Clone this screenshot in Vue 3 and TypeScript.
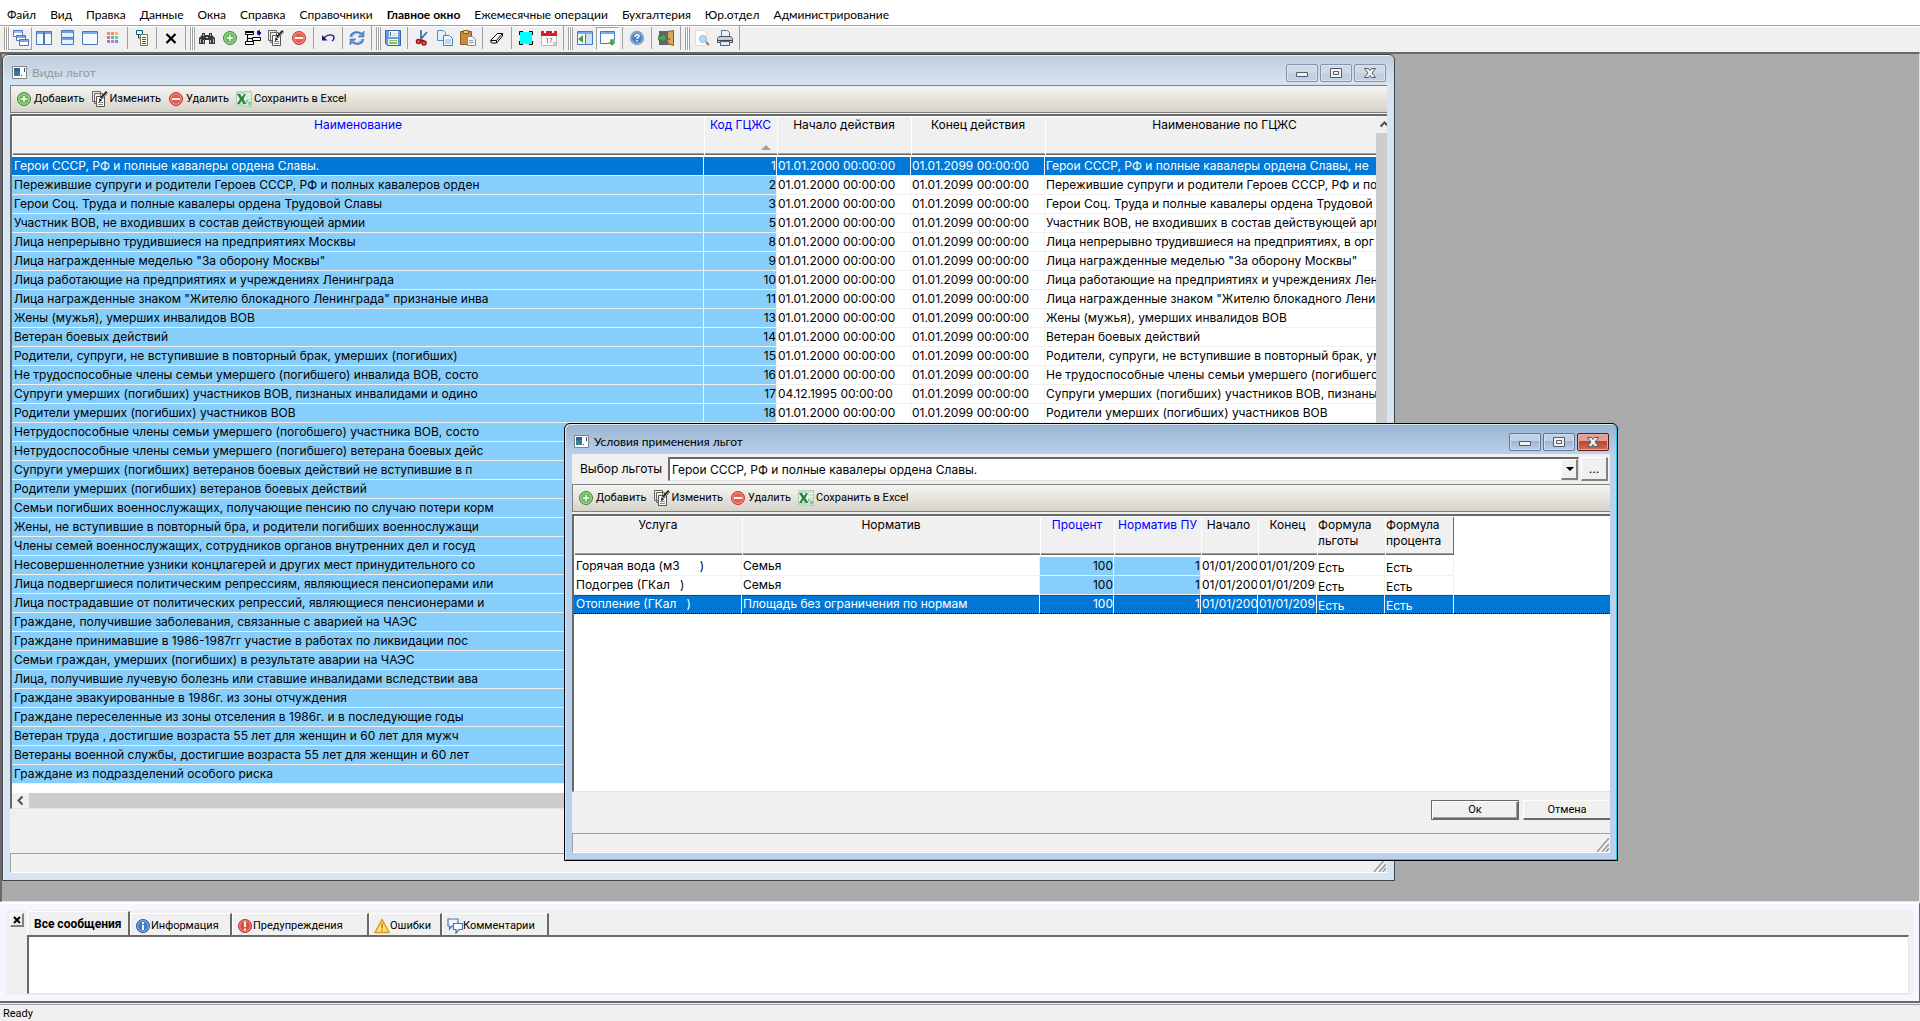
<script setup lang="ts">
import { ref } from 'vue'

const menu = ['Файл', 'Вид', 'Правка', 'Данные', 'Окна', 'Справка', 'Справочники', 'Главное окно',
  'Ежемесячные операции', 'Бухгалтерия', 'Юр.отдел', 'Администрирование']

const icons: Record<string, string> = {
  cascade: '<g stroke="#4a78b8" fill="#fff"><path d="M.5 .5h9v6h-9z"/><path fill="#9cc0ee" stroke="none" d="M1 1h8v2H1z"/><path d="M3.500 5.500h9v5h-9z"/><path fill="#7ba7e0" stroke="none" d="M4 6h8v2H4z"/><path d="M6.500 9.500h9v6h-9z"/><path fill="#7ba7e0" stroke="none" d="M7 10h8v2H7z"/></g>',
  columns: '<path fill="#f4f8ff" stroke="#4a78b8" d="M.5 1.500h15v13H.5z"/><path fill="#6fa0e0" d="M1 2h14v2H1z"/><path stroke="#4a78b8" d="M7.500 2v12M8.500 2v12"/>',
  rows: '<path fill="#e4eefc" stroke="#4a78b8" d="M2.500 .5h12v14h-12z"/><path fill="#6fa0e0" d="M3 1h11v2H3zM3 8h11v2H3z"/><path stroke="#4a78b8" d="M3 7.500h11"/>',
  single: '<path fill="#f4f8ff" stroke="#4a78b8" d="M.5 1.500h15v13H.5z"/><path fill="#7bace8" d="M1 2h14v2H1z"/>',
  palette: '<path fill="#f28b6c" d="M2 2h3v3H2zM6 2h3v3H6z"/><path fill="#f4b860" d="M10 2h3v3h-3z"/><path fill="#f06a7a" d="M2 6h3v3H2z"/><path fill="#5ecb68" d="M6 6h3v3H6z"/><path fill="#66c8d8" d="M10 6h3v3h-3z"/><path fill="#8a8ad8" d="M2 10h3v3H2z"/><path fill="#c07ad0" d="M6 10h3v3H6z"/><path fill="#6c94e0" d="M10 10h3v3h-3z"/>',
  tree: '<path fill="#dff" stroke="#067" d="M2.500 .5h6v4h-6z"/><path fill="none" stroke="#333" d="M4.500 5v3H7"/><path fill="#fffbe8" stroke="#776" d="M6.500 4.500h7v11h-7z"/><path stroke="#555" d="M8 7.500h4M8 9.500h4M8 11.500h4M8 13.500h4"/>',
  close: '<path stroke="#000" stroke-width="2.200" d="M3.500 4l9 9M12.500 4l-9 9"/>',
  find: '<path fill="#333b40" d="M3 3h3v2h4V3h3v2l3 3v6h-6v-4H6v4H0V8l3-3z"/><path fill="#a9b8c0" d="M1 9h1v4H1zM4 10h1v3H4zM11 10h1v3h-1zM14 9h1v4h-1zM4 4h1v2H4zM11 4h1v2h-1z"/><path fill="#ddd" d="M7 7h2v1H7z"/>',
  add: '<circle cx="8" cy="8" r="6.500" fill="#6cbf5a" stroke="#3f8a36"/><circle cx="8" cy="8" r="5.300" fill="none" stroke="#b4e0a4" stroke-width=".8"/><path fill="#fff" stroke="#3f8a36" stroke-width=".4" d="M7 4.500h2V7h2.500v2H9v2.500H7V9H4.500V7H7z"/>',
  insert: '<path fill="#fff" stroke="#000" d="M.5 2.500h8v2h-8zM.5 11.500h8v3h-8zM7.500 7.500h8v3h-8z"/><path stroke="#000" d="M0 1.500h9M2.500 4v8M2 8.500h6"/><path fill="#11a" d="M12 1l3-1v2h1v2h-1v2l-3-2z"/>',
  edit: '<path fill="#eee" stroke="#666" d="M.5 .5h8v10h-8zM2.500 2.500h8v10h-8z"/><path fill="#fff" stroke="#555" d="M4.500 5.500h8v10h-8z"/><path stroke="#888" d="M6 11.500h5M6 13.500h5"/><path stroke="#222" stroke-width="2.600" d="M15 1L9 7.500"/><path stroke="#c9c28a" d="M15.500 1.500L10 7.500"/><path fill="#111" d="M7.500 7l2.500 2.500L7 11z"/>',
  remove: '<circle cx="8" cy="8" r="6.500" fill="#e85c4c" stroke="#c23a30"/><circle cx="8" cy="8" r="5.300" fill="none" stroke="#f7a79c" stroke-width=".8"/><path fill="#fff" d="M4 7h8v2H4z"/>',
  undo: '<path fill="none" stroke="#1a1a7c" stroke-width="1.300" d="M4 8c3-4 9-4 10-1 .5 2-.5 3-2 4"/><path fill="#1a1a7c" d="M2 5v5.500h5.500z"/>',
  refresh: '<path fill="none" stroke="#3f74b4" stroke-width="2.600" d="M2 7c1-5 8-6 11-2M14 9c-1 5-8 6-11 2"/><path fill="#5c93d0" stroke="#3f74b4" stroke-width=".6" d="M15 1v6H9zM1 15V9h6z"/><path fill="none" stroke="#b9d5f2" d="M2.500 6.500c2-4 7-4 9.500-1.500M13.500 9.500c-2 4-7 4-9.500 1.500"/>',
  save: '<path fill="#6a9bdc" stroke="#3a64a4" d="M.5 .5h15v15H2.500l-2-2z"/><path fill="#f6f9ff" d="M4 1h9v6H4z"/><path fill="#3a64a4" d="M5 2h1v4H5z"/><path fill="#bcd3f2" d="M7 3h5v1H7zM7 5h5v1H7z"/><path fill="#eef4e4" d="M3 9h10v6H3z"/><path fill="#8ac060" d="M4 10h8v1H4zM4 12h8v2H4z"/>',
  cut: '<path stroke="#3d6ea5" stroke-width="1.700" d="M7 0v9M13 2L7 9"/><g fill="#e66" stroke="#a11414" stroke-width="1.600"><circle cx="4.500" cy="11.500" r="2"/><circle cx="10" cy="13" r="2"/></g><path stroke="#a11414" stroke-width="2" d="M6 10l4 1"/>',
  copy: '<path fill="#e3eefc" stroke="#5b8ccc" d="M.5 .5h6l2 2v8h-8z"/><path fill="#f4f9ff" stroke="#4a7cc0" d="M6.500 5.500h6l3 3v7h-9z"/><path fill="#bcd6f5" d="M8 9h6v5H8z"/>',
  paste: '<path fill="#c98a3c" stroke="#8a5a20" d="M.5 1.500h11v13H.5z"/><path fill="#e6c878" stroke="#8a5a20" d="M3.500 .5h5v3h-5z"/><path fill="#f6f6f6" stroke="#888" d="M7.500 6.500h5l3 3v6h-8z"/><path stroke="#999" d="M9 10.500h4M9 12.500h5"/>',
  erase: '<path fill="#fff" stroke="#000" d="M1.500 10.500l7-7h5v2.500l-6 7h-5zM2 10.500h5.500l6-7M7.500 10.500V13"/>',
  cyan: '<path fill="#0ff" d="M2 2h12v12H2z"/><path fill="none" stroke="#000" d="M1.500 5V1.500H5M11 1.500h3.500V5M14.500 11v3.500H11M5 14.500H1.500V11"/>',
  calendar: '<path fill="#fafafa" stroke="#bbb" d="M.5 2.500h15v13H.5z"/><path fill="#d81e28" d="M0 1h16v5H0z"/><path fill="#fff" d="M3 0h2v3H3zM11 0h2v3h-2z"/><path stroke="#999" fill="none" d="M5 8.500h1.500V13M8.500 8.500h2.500L9 13"/><path fill="#ccc" d="M12 12h3v3h-3z"/>',
  paneLeft: '<path fill="#f8fbff" stroke="#4a78b8" d="M.5 1.500h15v13H.5z"/><path fill="#7bace8" d="M1 2h14v2H1z"/><path fill="#cfe0f4" d="M8 4h7v10H8z"/><path stroke="#4a78b8" d="M8.500 4v11"/><path fill="#4e9f3c" d="M1 9l5-4v8z"/>',
  paneDown: '<path fill="#f8fbff" stroke="#4a78b8" d="M.5 1.500h14v12H.5z"/><path fill="#7bace8" d="M1 2h13v2H1z"/><path fill="#4e9f3c" stroke="#fff" stroke-width=".5" d="M10 9h4v3h2l-4 4-4-4h2z"/>',
  help: '<circle cx="8" cy="8" r="6.500" fill="#7fa9d8" stroke="#8ba3c2" stroke-width="1.400"/><circle cx="8" cy="8" r="4.800" fill="#4b7fc0"/><path fill="none" stroke="#fff" stroke-width="1.500" d="M6 7c0-3 4-3 4-.8C10 7.500 8 7.500 8 9M8 10v1.600"/>',
  exit: '<path fill="#666" d="M1 1h10v14H1z"/><path fill="#d9a45c" stroke="#8b5a24" d="M9.500 1.500l6-1v15l-6-2z"/><path fill="#8b5a24" d="M10.500 8h1.500v2h-1.500z"/><path fill="#4fa55c" stroke="#2a7438" stroke-width=".6" d="M0 6h4V3.500L9 8l-5 4.500V10H0z"/>',
  preview: '<path fill="#fff" stroke="#ddd" d="M1.500 .5h8l3 3v12h-11z"/><circle cx="9" cy="9" r="3.500" fill="#b5dbfa" stroke="#9cb8d0"/><path stroke="#a77658" stroke-width="2" d="M12 12l3 3"/>',
  print: '<path fill="#e4f0fc" stroke="#678" d="M4.500 .5h6l2 2v5h-8z"/><path fill="#c8ccd2" stroke="#4c5560" d="M2 6.500h12l1.500 2v4H.5v-4z"/><path fill="#444" d="M1 10h14v1H1z"/><path fill="#dcecfa" stroke="#567" d="M3.500 11.500h9v4h-9z"/>',
  excel: '<path fill="#e9f4ea" stroke="#a9cfae" d="M.5 .5h15v15H.5z"/><path fill="#b9dcc0" d="M0 0h9v3H0zM0 12h9v4H0z"/><path fill="#cfe6d2" d="M10 1h5v14h-5z"/><path fill="#2f8344" d="M1 3h3l2 3 2-3h2L7.500 8l3 5h-3L5.500 10l-2 3H1l3-5z"/><path fill="#8cc79a" d="M10 9h2v2h-2zM12 11h3v3h-3z"/><path fill="#f4fbf4" d="M11 3h4v1h-4zM11 6h4v1h-4z"/>',
  info: '<circle cx="8" cy="8" r="6.500" fill="#3f7cc4" stroke="#2b5a98"/><circle cx="8" cy="8" r="5.300" fill="none" stroke="#a6c8ee" stroke-width=".8"/><path fill="#fff" d="M7 4h2v2H7zM7 7h2v5H7z"/>',
  alert: '<circle cx="8" cy="8" r="6.500" fill="#e0503e" stroke="#b8342a"/><circle cx="8" cy="8" r="5.300" fill="none" stroke="#f5a298" stroke-width=".8"/><path fill="#fff" d="M7 3.500h2V9H7zM7 10.500h2v2H7z"/>',
  warn: '<path fill="#ffe27a" stroke="#d79a1c" stroke-width="1.500" stroke-linejoin="round" d="M8 1.500l7 13H1z"/><path fill="#b88010" d="M7.300 5.500h1.500v5H7.300zM7.300 11.500h1.500V13H7.300z"/>',
  chat: '<path fill="#eef5ff" stroke="#4878b4" stroke-width="1.200" d="M1 1h10v7H5l-2.500 3V8H1z"/><path fill="#f8fbff" stroke="#4878b4" stroke-width="1.200" d="M6.500 5.500h9v6H12l-3 3.500v-3.500H6.500z"/>',
  form: '<path fill="#fff" stroke="#7c858e" d="M.5 1.500h14v12H.5z"/><path fill="#3b7d8c" d="M2 3h6v8H2z"/><path fill="#2b5fa0" d="M2 3h6v3H2z"/><path fill="#445" d="M12 3h1v4h-1zM9 10h1v1H9z"/>',
}

const S = '|'
const bars: string[][] = [
  ['cascade', 'columns', 'rows', 'single', 'palette', S, 'tree', S, 'close'],
  ['find', 'add', 'insert', 'edit', 'remove', S, 'undo', S, 'refresh'],
  ['save', S, 'cut', 'copy', 'paste', S, 'erase', S, 'cyan', 'calendar'],
  ['paneLeft', 'paneDown', S, 'help', S, 'exit'],
  ['preview', 'print'],
]

const actions = [
  { icon: 'add', label: 'Добавить' },
  { icon: 'edit', label: 'Изменить' },
  { icon: 'remove', label: 'Удалить' },
  { icon: 'excel', label: 'Сохранить в Excel' },
]

interface Benefit { name: string; code?: number; from?: string; to?: string; full?: string }
const D = '01.01.2000 00:00:00'
const E = '01.01.2099 00:00:00'
const b = (code: number, name: string, full = name, from = D): Benefit => ({ name, code, from, to: E, full })
const benefits: Benefit[] = [
  b(1, 'Герои СССР, РФ и полные кавалеры ордена Славы.', 'Герои СССР, РФ и полные кавалеры ордена Славы, не'),
  b(2, 'Пережившие супруги и родители Героев СССР, РФ и полных кавалеров орден'),
  b(3, 'Герои Соц. Труда и полные кавалеры ордена Трудовой Славы'),
  b(5, 'Участник ВОВ, не входивших в состав действующей армии'),
  b(8, 'Лица непрерывно трудившиеся на предприятиях Москвы', 'Лица непрерывно трудившиеся на предприятиях, в орг'),
  b(9, 'Лица награжденные меделью "За оборону Москвы"'),
  b(10, 'Лица работающие на предприятиях и учреждениях Ленинграда'),
  b(11, 'Лица награжденные знаком "Жителю блокадного Ленинграда" признаные инва'),
  b(13, 'Жены (мужья), умерших инвалидов ВОВ'),
  b(14, 'Ветеран боевых действий'),
  b(15, 'Родители, супруги, не вступившие в повторный брак, умерших (погибших)'),
  b(16, 'Не трудоспособные члены семьи умершего (погибшего) инвалида ВОВ, состо'),
  b(17, 'Супруги умерших (погибших) участников ВОВ, пизнаных инвалидами и одино', undefined, '04.12.1995 00:00:00'),
  b(18, 'Родители умерших (погибших) участников ВОВ'),
  ...[
    'Нетрудоспособные члены семьи умершего (погобшего) участника ВОВ, состо',
    'Нетрудоспособные члены семьи умершего (погибшего) ветерана боевых дейс',
    'Супруги умерших (погибших) ветеранов боевых действий не вступившие в п',
    'Родители умерших (погибших) ветеранов боевых действий',
    'Семьи погибших военнослужащих, получающие пенсию по случаю потери корм',
    'Жены, не вступившие в повторный бра, и родители погибших военнослужащи',
    'Члены семей военнослужащих, сотрудников органов внутренних дел и госуд',
    'Несовершеннолетние узники концлагерей и других мест принудительного со',
    'Лица подвергшиеся политическим репрессиям, являющиеся пенсиоперами или',
    'Лица пострадавшие от политических репрессий, являющиеся пенсионерами и',
    'Граждане, получившие заболевания, связанные с аварией на ЧАЭС',
    'Граждане принимавшие в 1986-1987гг участие в работах по ликвидации пос',
    'Семьи граждан, умерших (погибших) в результате аварии на ЧАЭС',
    'Лица, получившие лучевую болезнь или ставшие инвалидами вследствии ава',
    'Граждане эвакуированные в 1986г. из зоны отчуждения',
    'Граждане переселенные из зоны отселения в 1986г. и в последующие годы',
    'Ветеран труда , достигшие возраста 55 лет для женщин и 60 лет для мужч',
    'Ветераны военной службы, достигшие возраста 55 лет для женщин и 60 лет',
    'Граждане из подразделений особого риска',
  ].map(name => ({ name })),
]

const terms = [
  { service: 'Горячая вода (м3      )', norm: 'Семья' },
  { service: 'Подогрев (ГКал   )', norm: 'Семья' },
  { service: 'Отопление (ГКал   )', norm: 'Площадь без ограничения по нормам' },
]

const tabs = [
  { label: 'Все сообщения', icon: '', size: 'w1' },
  { label: 'Информация', icon: 'info', size: 'w2' },
  { label: 'Предупреждения', icon: 'alert', size: 'w3' },
  { label: 'Ошибки', icon: 'warn', size: 'w4' },
  { label: 'Комментарии', icon: 'chat', size: 'w5' },
]

const selectedBenefit = ref(0)
const selectedTerm = ref(2)
const activeTab = ref(0)
const messages = ref('')
</script>

<template>
  <div class="app">
    <nav class="menu">
      <button v-for="m in menu" :key="m" type="button" :class="{ strong: m === 'Главное окно' }">{{ m }}</button>
    </nav>

    <div class="bars">
      <div v-for="(bar, i) in bars" :key="i" class="bar">
        <span class="grip"></span>
        <template v-for="(it, j) in bar" :key="j">
          <span v-if="it === S" class="sep"></span>
          <button v-else type="button" class="tool" :class="{ raised: it === 'cascade', pressed: it === 'paneDown' }" :aria-label="it">
            <svg class="ico" viewBox="0 0 16 16" v-html="icons[it]" />
          </button>
        </template>
      </div>
    </div>

    <main class="mdi">
      <section class="win back">
        <header class="title">
          <svg class="ico" viewBox="0 0 16 16" v-html="icons.form" />
          <h2>Виды льгот</h2>
          <div class="ctl">
            <button type="button" aria-label="Свернуть"><svg viewBox="0 0 14 12"><path class="g" d="M1.500 5.500h11v4h-11z" /></svg></button>
            <button type="button" aria-label="Развернуть"><svg viewBox="0 0 14 12"><path class="g" d="M1.500 1.500h11v9h-11zM4.500 4.500h5v3h-5z" /></svg></button>
            <button type="button" aria-label="Закрыть"><svg viewBox="0 0 14 12"><path class="g" d="M1.500 1.500h4l1.500 2 1.500-2h4L9 6l3.500 4.500h-4L7 8.500l-1.500 2h-4L5 6z" /></svg></button>
          </div>
        </header>
        <div class="body">
          <div class="strip">
            <button v-for="a in actions" :key="a.icon" type="button"><svg class="ico" viewBox="0 0 16 16" v-html="icons[a.icon]" />{{ a.label }}</button>
          </div>
          <div class="grid">
            <div class="pane">
              <div class="view">
                <table>
                  <colgroup><col class="c-name"><col class="c-code"><col class="c-date"><col class="c-date"><col></colgroup>
                  <thead>
                    <tr>
                      <th class="key">Наименование</th>
                      <th class="key sorted">Код ГЦЖС<i></i></th>
                      <th>Начало действия</th>
                      <th>Конец действия</th>
                      <th>Наименование по ГЦЖС</th>
                    </tr>
                  </thead>
                  <tbody>
                    <tr v-for="(r, i) in benefits" :key="i" :class="{ sel: i === selectedBenefit }" @click="selectedBenefit = i">
                      <td class="blue">{{ r.name }}</td>
                      <td class="blue num">{{ r.code }}</td>
                      <td>{{ r.from }}</td>
                      <td>{{ r.to }}</td>
                      <td>{{ r.full }}</td>
                    </tr>
                  </tbody>
                </table>
              </div>
              <div class="vscroll"><button type="button" aria-label="Вверх"><svg viewBox="0 0 17 17"><path d="M4.500 10.500L8.500 6.500l4 4" /></svg></button></div>
            </div>
            <div class="hscroll"><button type="button" aria-label="Влево"><svg viewBox="0 0 17 15"><path d="M10.500 3.500L6.500 7.500l4 4" /></svg></button></div>
          </div>
          <div class="blank"></div>
          <div class="wstatus"><svg viewBox="0 0 14 14"><path d="M2 14L14 0M7 14l7-8M11 14l3-4" /></svg></div>
        </div>
      </section>

      <section class="win front">
        <header class="title">
          <svg class="ico" viewBox="0 0 16 16" v-html="icons.form" />
          <h2>Условия применения льгот</h2>
          <div class="ctl">
            <button type="button" aria-label="Свернуть"><svg viewBox="0 0 14 12"><path class="g" d="M1.500 5.500h11v4h-11z" /></svg></button>
            <button type="button" aria-label="Развернуть"><svg viewBox="0 0 14 12"><path class="g" d="M1.500 1.500h11v9h-11zM4.500 4.500h5v3h-5z" /></svg></button>
            <button type="button" class="red" aria-label="Закрыть"><svg viewBox="0 0 14 12"><path class="g" d="M1.500 1.500h4l1.500 2 1.500-2h4L9 6l3.500 4.500h-4L7 8.500l-1.500 2h-4L5 6z" /></svg></button>
          </div>
        </header>
        <div class="body">
          <div class="field">
            <label for="benefit">Выбор льготы</label>
            <div class="combo">
              <select id="benefit"><option>{{ benefits[0].name }}</option></select>
              <span class="drop"></span>
            </div>
            <button type="button" class="dots">...</button>
          </div>
          <div class="strip">
            <button v-for="a in actions" :key="a.icon" type="button"><svg class="ico" viewBox="0 0 16 16" v-html="icons[a.icon]" />{{ a.label }}</button>
          </div>
          <div class="grid">
            <div class="view">
              <table>
                <colgroup><col class="t1"><col class="t2"><col class="t3"><col class="t4"><col class="t5"><col class="t6"><col class="t7"><col class="t8"><col></colgroup>
                <thead>
                  <tr>
                    <th>Услуга</th>
                    <th>Норматив</th>
                    <th class="key">Процент</th>
                    <th class="key">Норматив ПУ</th>
                    <th class="tight">Начало</th>
                    <th>Конец</th>
                    <th class="left">Формула льготы</th>
                    <th class="left last">Формула процента</th>
                    <th class="none"></th>
                  </tr>
                </thead>
                <tbody>
                  <tr v-for="(t, i) in terms" :key="i" :class="{ sel: i === selectedTerm, focus: i === selectedTerm }" @click="selectedTerm = i">
                    <td>{{ t.service }}</td>
                    <td>{{ t.norm }}</td>
                    <td class="blue num">100</td>
                    <td class="blue num">1</td>
                    <td>01/01/2000</td>
                    <td>01/01/2099</td>
                    <td class="low">Есть</td>
                    <td class="low">Есть</td>
                    <td class="none"></td>
                  </tr>
                </tbody>
              </table>
            </div>
          </div>
          <div class="confirm">
            <button type="button" class="ok">Ок</button>
            <button type="button">Отмена</button>
          </div>
          <div class="wstatus"><svg viewBox="0 0 14 14"><path d="M2 14L14 0M7 14l7-8M11 14l3-4" /></svg></div>
        </div>
      </section>
    </main>

    <section class="log">
      <button type="button" class="x" aria-label="Закрыть"><svg viewBox="0 0 10 10"><path d="M2 2l6 6M8 2L2 8" /></svg></button>
      <div class="logmain">
        <div class="tabs" role="tablist">
          <button v-for="(t, i) in tabs" :key="t.label" type="button" role="tab" :aria-selected="i === activeTab" :class="[t.size, { active: i === activeTab }]" @click="activeTab = i">
            <svg v-if="t.icon" class="ico" viewBox="0 0 16 16" v-html="icons[t.icon]" />{{ t.label }}
          </button>
        </div>
        <textarea v-model="messages" aria-label="Сообщения" readonly></textarea>
      </div>
    </section>

    <footer class="status">Ready</footer>
  </div>
</template>

<style>
body { margin: 0; }
</style>

<style scoped>
* { box-sizing: border-box; }
.app { display: flex; flex-direction: column; height: 100vh; overflow: hidden; background: #f0f0f0; color: #000; font: 12px/16px Inter, 'Liberation Sans', sans-serif; }
button { margin: 0; padding: 0; border: 0; background: none; color: inherit; font: inherit; }
svg { display: block; flex: none; }
.ico { width: 16px; height: 16px; }

.menu { display: flex; gap: 14px; flex: none; height: 25px; padding: 6px 7px 0; background: #fff; font: 12px/18px Lato, 'Liberation Sans', sans-serif; white-space: nowrap; }
.menu button { height: 18px; }
.menu .strong { font-weight: bold; }

.bars { display: flex; gap: 4px; flex: none; height: 27px; padding: 0 0 2px 4px; border-top: 1px solid #a0a0a0; box-shadow: inset 0 1px #fff; }
.bar { display: flex; align-items: center; padding-right: 3px; border-right: 1px solid #a0a0a0; }
.grip { width: 5px; height: 23px; border: solid #a0a0a0; border-width: 0 1px; background: linear-gradient(90deg, #fff 1px, #a0a0a0 1px, #a0a0a0 2px, #fff 2px); }
.sep { width: 1px; height: 22px; margin: 0 2px 0 3px; background: #a0a0a0; }
.tool { display: grid; place-items: center; width: 23px; height: 23px; border: 1px solid transparent; }
.raised { border-color: #fff #a0a0a0 #a0a0a0 #fff; }
.pressed { border-color: #a0a0a0 #fff #fff #a0a0a0; background: #f8f8f8; }

.mdi { position: relative; flex: 1; min-height: 0; overflow: hidden; background: #ababab; border: solid; border-width: 2px 1px 1px 2px; border-color: #696969 #e3e3e3 #e3e3e3 #696969; }
.win { position: absolute; display: flex; flex-direction: column; padding: 0 7px 7px; border: 1px solid #404448; border-radius: 6px 6px 0 0; }
.back { left: 0; top: 0; width: 1393px; height: 827px; background: linear-gradient(#bfcddb, #d7e4f2 30px); box-shadow: inset 1px 1px #eef3f9; color: #000; }
.front { left: 562px; top: 369px; width: 1054px; height: 438px; border-color: #000; background: linear-gradient(#99b4d1, #b9d1ea 30px); box-shadow: inset 1px 1px #dfe9f4, inset -1px -1px #2cc5e0; }
.title { display: flex; align-items: center; gap: 3px; flex: none; height: 30px; padding: 6px 1px 0 2px; }
.title h2 { flex: 1; margin: 0 0 0 1px; font: 12px/16px Lato, 'Liberation Sans', sans-serif; }
.back h2 { color: #9099a3; }
.ctl { display: flex; gap: 2px; }
.ctl button { display: grid; place-items: center; width: 32px; height: 18px; border: 1px solid #8493ac; border-radius: 2px; box-shadow: inset 0 0 0 1px #dae4ef; background: linear-gradient(#cfdae7 50%, #c3d0df 50%); }
.ctl svg { width: 14px; height: 12px; }
.g { fill: #f2f2f2; stroke: #545b6b; }
.front .ctl button { border-color: #5f7796; box-shadow: inset 0 0 0 1px #cfdeee; background: linear-gradient(#bed1e5 45%, #9db6d0 45%, #b8d0e8); }
.front .ctl .red { border-color: #5b1a1e; box-shadow: inset 0 0 0 1px #e6aaa2; background: linear-gradient(#e2a093 45%, #bd4232 45%, #cf6c52); }
.body { display: flex; flex-direction: column; flex: 1; min-height: 0; overflow: hidden; background: #f0f0f0; }

.strip { display: flex; align-items: flex-start; gap: 7px; flex: none; height: 28px; padding: 5px 5px 0; border: solid #808080; border-width: 1px 0 1px 1px; background: linear-gradient(#f5f4f1, #d6d3ca); font: 11px/16px Roboto, 'Liberation Sans', sans-serif; }
.strip button { display: flex; gap: 2px; height: 16px; white-space: nowrap; }

.grid { display: flex; flex-direction: column; flex: 1; min-height: 0; margin-top: 1px; border: solid; border-width: 2px 0 1px 2px; border-color: #696969 #fff #e3e3e3 #696969; background: #fff; overflow: hidden; }
.front .grid { margin-top: 2px; }
.pane { display: flex; flex: 1; min-height: 0; }
.view { flex: 1; min-width: 0; overflow: hidden; }
table { width: 100%; border-collapse: separate; border-spacing: 0; table-layout: fixed; }
.pane table { width: calc(100% + 28px); }
th { height: 41px; padding: 1px 2px 0; border-bottom: 2px solid #fff; background: #f0f0f0 padding-box; box-shadow: inset 1px 1px #fff, inset 0 -1px #696969, inset 0 -2px #a0a0a0; font-weight: normal; vertical-align: top; overflow: hidden; }
th.key { color: #00f; }
th.left { padding-left: 1px; text-align: left; }
th.tight { padding-left: 0; }
th.last { box-shadow: inset 1px 1px #fff, inset -1px -1px #696969, inset 0 -2px #a0a0a0; }
th.none { background: #fff; box-shadow: none; }
.sorted i { display: block; width: 0; height: 0; margin: 12px 4px 0 auto; border: solid transparent; border-width: 0 5px 5px; border-bottom-color: #a0a0a0; }
td { height: 19px; padding: 0 1px; border: solid #f0f0f0; border-width: 0 1px 1px 0; line-height: 18px; white-space: pre; overflow: hidden; text-overflow: clip; }
td:first-child { padding-left: 2px; }
td.blue { background: #87cefa padding-box; }
td.num { padding-right: 0; text-align: right; }
td.none { border: 0; }
td.low { padding-top: 4px; line-height: 14px; }
.sel td { background: #0078d7 padding-box; color: #fff; }
.focus td { border-bottom: 1px dotted #000; background-clip: border-box; box-shadow: inset 0 1px #0050a8; }
.focus td.none { background: #0078d7; }
.c-name { width: 692px; } .c-code { width: 73px; } .c-date { width: 134px; }
.t1 { width: 168px; } .t2 { width: 298px; } .t3 { width: 74px; } .t4 { width: 87px; } .t5 { width: 57px; } .t6 { width: 59px; } .t7 { width: 68px; } .t8 { width: 69px; }
.vscroll { width: 11px; overflow: hidden; background: #cdcdcd; }
.vscroll button, .hscroll button { display: block; background: #f0f0f0; }
.vscroll svg { width: 17px; height: 17px; }
.vscroll path, .hscroll path { fill: none; stroke: #505050; stroke-width: 2; }
.hscroll { flex: none; height: 15px; background: #cdcdcd; }
.hscroll svg { width: 17px; height: 15px; }
.blank { flex: none; height: 44px; }
.wstatus { display: flex; justify-content: flex-end; align-items: flex-end; flex: none; height: 20px; padding-right: 1px; border: solid; border-width: 1px 0 1px 1px; border-color: #a0a0a0 #fff #fff #a0a0a0; }
.wstatus svg { width: 14px; height: 14px; fill: none; stroke: #9a9a9a; stroke-width: 1.500; }

.field { display: flex; align-items: center; flex: none; height: 30px; padding: 0 2px 0 8px; }
.field label { width: 88px; white-space: nowrap; }
.combo { position: relative; flex: 1; height: 24px; border: solid; border-width: 2px 1px 1px 2px; border-color: #696969 #e3e3e3 #e3e3e3 #696969; background: #fff; }
.combo select { width: 100%; height: 100%; padding: 0 2px; border: 0; background: none; color: #000; font: inherit; appearance: none; }
.drop { position: absolute; top: 0; right: 0; width: 17px; height: 21px; border: solid; border-width: 1px 2px 2px 1px; border-color: #fff #808080 #808080 #fff; background: #f0f0f0; pointer-events: none; }
.drop::after { content: ''; position: absolute; left: 4px; top: 7px; border: solid transparent; border-width: 4px 4px 0; border-top-color: #000; }
.dots { width: 27px; height: 24px; margin-left: 2px; border: solid; border-width: 1px 2px 2px 1px; border-color: #fff #808080 #808080 #fff; }
.confirm { display: flex; justify-content: flex-end; gap: 4px; flex: none; height: 41px; margin-right: -1px; padding-top: 8px; font: 11px/16px Roboto, 'Liberation Sans', sans-serif; }
.confirm button { width: 88px; height: 20px; border: solid; border-width: 1px 1px 2px; border-color: #fff #a0a0a0 #696969 #fff; }
.confirm .ok { border: 1px solid #696969; box-shadow: inset 1px 1px #fff, inset -1px -1px #696969, inset -2px -2px #a0a0a0; }

.log { display: flex; flex: none; height: 101px; padding: 3px 4px 3px 3px; border: solid; border-width: 2px 1px 2px 0; border-color: #fff #696969 #696969; background: #f0f0f0; box-shadow: inset 0 0 0 6px #f4f7fd; }
.x { display: grid; place-items: center; width: 14px; height: 14px; margin: 6px 3px 0 7px; border: solid; border-width: 1px 2px 2px 1px; border-color: #fff #808080 #808080 #fff; }
.x svg { width: 10px; height: 10px; stroke: #000; stroke-width: 2; }
.logmain { display: flex; flex-direction: column; flex: 1; min-width: 0; padding: 4px 6px 4px 0; }
.tabs { display: flex; align-items: flex-end; flex: none; height: 24px; font: 11px/16px Roboto, 'Liberation Sans', sans-serif; }
.tabs button { display: flex; align-items: center; height: 22px; padding: 2px 0 0 4px; border: solid; border-width: 1px 2px 0 1px; border-color: #fff #696969 #696969 #fff; white-space: nowrap; }
.tabs .active { height: 24px; padding: 0 0 0 6px; font-size: 12px; font-weight: bold; }
.w1 { width: 103px; } .w2 { width: 102px; } .w3 { width: 137px; } .w4 { width: 73px; } .w5 { width: 107px; }
textarea { flex: 1; margin: 0; padding: 2px; border: solid; border-width: 2px 1px 1px 2px; border-color: #696969 #e3e3e3 #e3e3e3 #696969; background: #fff; resize: none; outline: 0; font: inherit; }

.status { flex: none; height: 17px; margin-top: 1px; padding-left: 3px; border-top: 1px solid #a0a0a0; font: 11px/18px Roboto, 'Liberation Sans', sans-serif; }
</style>
